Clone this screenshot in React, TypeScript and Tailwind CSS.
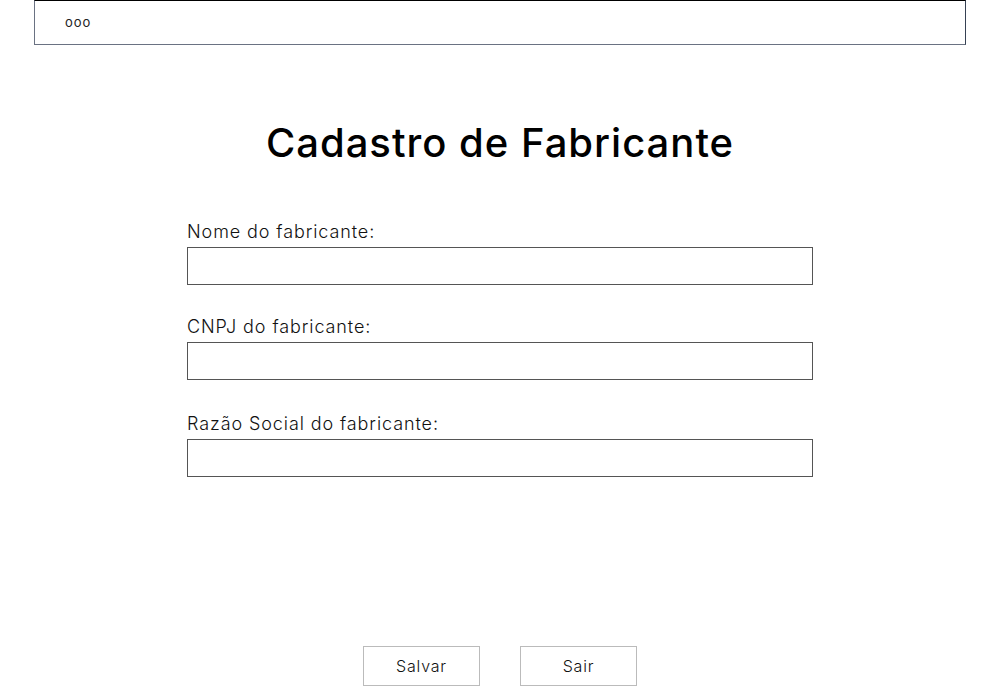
import React from 'react';

const fields = [
  { label: 'Nome do fabricante:', gap: '' },
  { label: 'CNPJ do fabricante:', gap: 'mt-[30px]' },
  { label: 'Razão Social do fabricante:', gap: 'mt-[32px]' },
];

const App = () => {
  return (
    <div className="w-[1000px] h-[700px] bg-white font-['Inter',sans-serif] text-black flex flex-col">
      <div className="mx-[34px] h-[45px] border border-t-black border-l-gray-500 border-r-gray-700 border-b-gray-500 flex items-center pl-[30px]">
        <span className="text-[13px] leading-none tracking-[1px] text-[#222]">ooo</span>
      </div>

      <h1 className="mt-[74px] text-center text-[40px] leading-[48px] font-medium tracking-[1px]">
        Cadastro de Fabricante
      </h1>

      <div className="mt-[53px] mx-auto w-[626px] flex flex-col">
        {fields.map((f) => (
          <div key={f.label} className={`flex flex-col ${f.gap}`}>
            <label className="text-[18px] leading-[24px] font-light tracking-[0.9px] text-[#111] mb-[3px]">{f.label}</label>
            <div className="h-[38px] border border-[#555] bg-white" />
          </div>
        ))}
      </div>

      <div className="mt-auto mb-[14px] flex justify-center gap-[40px]">
        <button className="w-[117px] h-[40px] border border-[#bbb] text-[16px] font-light tracking-[0.8px] text-[#111]">Salvar</button>
        <button className="w-[117px] h-[40px] border border-[#bbb] text-[16px] font-light tracking-[0.8px] text-[#111]">Sair</button>
      </div>
    </div>
  );
};

export default App;
